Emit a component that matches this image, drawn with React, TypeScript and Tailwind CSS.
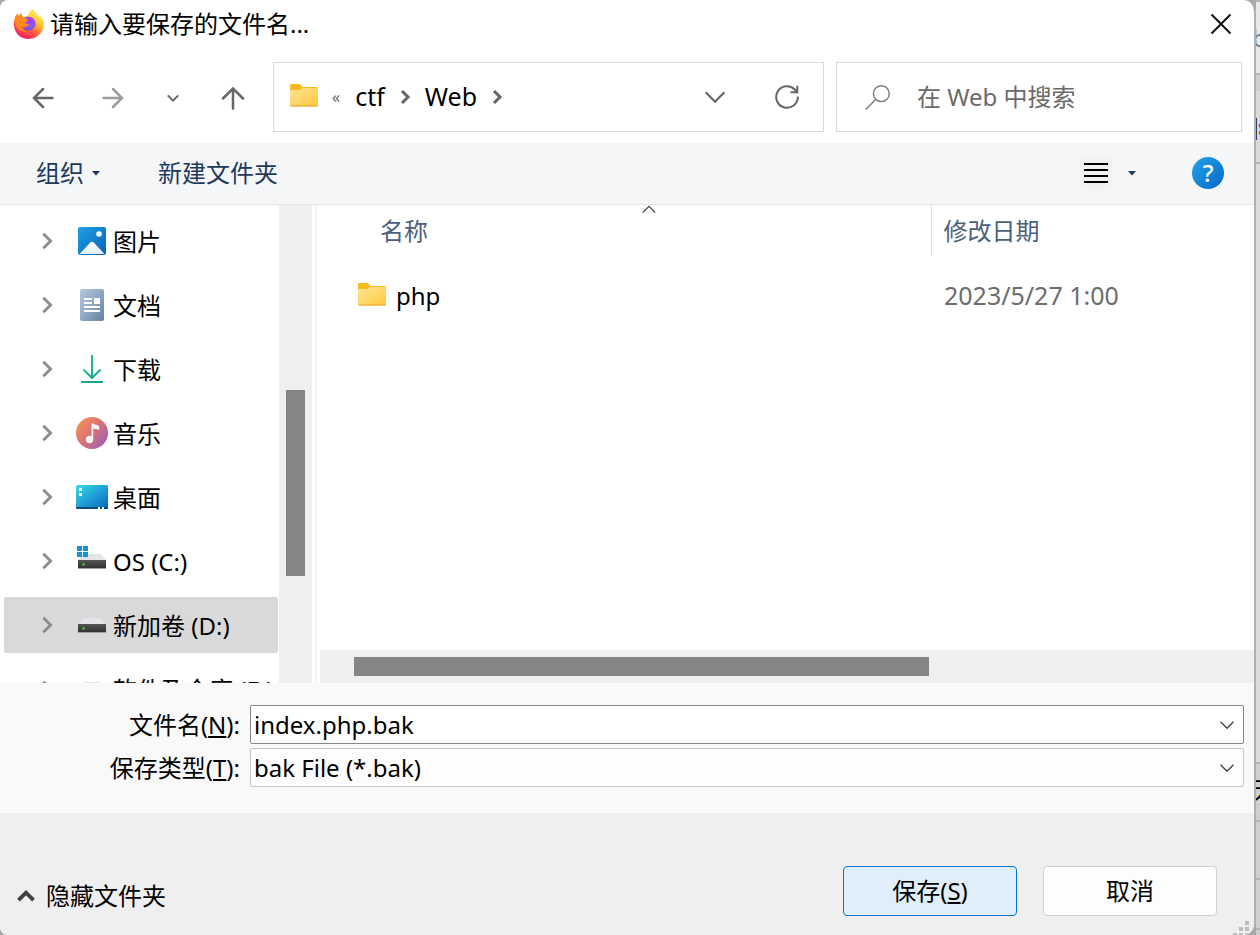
import type { ReactNode } from 'react';

function FirefoxIcon() {
  return (
    <svg viewBox="0 0 32 32" className="size-8 shrink-0" aria-hidden="true">
      <defs>
        <linearGradient id="fx-body" x1="0.85" y1="0.1" x2="0.2" y2="0.95">
          <stop offset="0" stopColor="#fff44f" />
          <stop offset="0.3" stopColor="#ffc02e" />
          <stop offset="0.55" stopColor="#ff7139" />
          <stop offset="0.8" stopColor="#ff3750" />
          <stop offset="1" stopColor="#f5156c" />
        </linearGradient>
        <linearGradient id="fx-flame" x1="0.7" y1="0" x2="0.4" y2="1">
          <stop offset="0" stopColor="#fff36e" />
          <stop offset="0.45" stopColor="#ffd23a" />
          <stop offset="1" stopColor="#ff8a16" stopOpacity="0" />
        </linearGradient>
        <radialGradient id="fx-globe" cx="0.6" cy="0.3" r="0.75">
          <stop offset="0" stopColor="#b833e1" />
          <stop offset="0.5" stopColor="#9059ff" />
          <stop offset="1" stopColor="#5b4fd8" />
        </radialGradient>
      </defs>
      <path
        d="M29.6 11.2c-.7-1.7-2.2-3.400-3.300-4 .9 1.700 1.300 3.400 1.500 4.600C26 7.400 22.900 5.600 20.400 1.700c-.2-.3-.3-.5-.4-.8-2.900 1.700-4.600 4.800-5 7.200-1.600.1-3 .6-4.300 1.400C8.700 8.400 8.200 7 8.700 5.300 7 6.100 5.900 7.400 5.100 8.500c-.5-.8-.5-2.200-.4-3C3 6.800 2.100 9.100 1.700 11 1.100 12.900 1 15 1 16.700 1 24.700 7.600 31 15.600 31c7.600 0 14-5.700 15.200-13.100.4-2.300 0-4.600-1.200-6.700z"
        fill="url(#fx-body)"
      />
      <circle cx="15.700" cy="15.700" r="6.900" fill="url(#fx-globe)" />
      <path
        d="M20 .9c-2.900 1.700-4.600 4.800-5 7.200 4 .1 7.900 2.800 8.200 7.500.2 4-2.400 7-5.800 7.800 5.500.8 10-3.200 10.400-8.500.2-5.600-5-8.600-7.400-13.200z"
        fill="url(#fx-flame)"
      />
      <path
        d="M4.700 5.500C3 6.800 2.100 9.100 1.700 11l-.4 3c1.900 7.500 7.400 10.900 13.800 9.900-3.100-.3-5.700-2.200-6.400-5.100 1.400.9 3.300.8 4.900-.2.600-.4 1.300-.6 1.900-.9.400-.3.600-.8.300-1.200-.6-.8-2.100-.6-3.400-1.100-.3-.8.200-1.400 2.800-2.800.3-1.200-1.900-1.300-2.600-1.800-.4-.4-.5-.9-1.900-1.300C8.700 8.400 8.200 7 8.700 5.300 7 6.100 5.900 7.400 5.100 8.500c-.5-.8-.5-2.200-.4-3z"
        fill="#ff8a1e"
      />
      <path d="M1.300 14c1.900 7.500 7.400 10.900 13.800 9.900 4 .3 7-.9 9-3.400-1.500 6-10 8.500-16 5.500-4-2-6.600-7-6.800-12z" fill="#ff4a4a" opacity="0.55" />
    </svg>
  );
}

function FolderIcon() {
  return (
    <svg viewBox="0 0 28 27" className="h-[27px] w-7 shrink-0" aria-hidden="true">
      <defs>
        <linearGradient id="folder" x1="0" y1="0" x2="1" y2="1">
          <stop offset="0" stopColor="#ffe596" />
          <stop offset="1" stopColor="#ffc83d" />
        </linearGradient>
      </defs>
      <path d="M0 1.500Q0 0 1.500 0H9q1 0 1.800 1L12.500 3H26.500Q28 3 28 4.500V12H0z" fill="#f9b91a" />
      <path d="M0 6H9q1.200 0 2-.8L12.300 4H27q1 0 1 1V21.500Q28 22.500 27 22.500H1Q0 22.500 0 21.500z" fill="url(#folder)" />
      <path d="M.5 22H27.500" stroke="#e6a82b" strokeWidth="1" />
    </svg>
  );
}

function PicturesIcon() {
  return (
    <svg viewBox="0 0 32 32" className="size-8" aria-hidden="true">
      <defs>
        <linearGradient id="pic" x1="0" y1="0" x2="1" y2="1">
          <stop offset="0" stopColor="#1f9fe8" />
          <stop offset="1" stopColor="#0861b8" />
        </linearGradient>
        <linearGradient id="hill" x1="0" y1="0" x2="0" y2="1">
          <stop offset="0" stopColor="#ffffff" />
          <stop offset="1" stopColor="#dfeefb" />
        </linearGradient>
      </defs>
      <rect x="2" y="2" width="28" height="28" rx="2" fill="url(#pic)" />
      <path d="M3.500 29L14.300 17.600q1.700-1.700 3.400 0L28.500 29z" fill="url(#hill)" />
      <circle cx="23" cy="9" r="2.800" fill="#f4faff" />
    </svg>
  );
}

function DocumentsIcon() {
  return (
    <svg viewBox="0 0 32 32" className="size-8" aria-hidden="true">
      <defs>
        <linearGradient id="doc" x1="0" y1="0" x2="1" y2="1">
          <stop offset="0" stopColor="#b5c6db" />
          <stop offset="0.5" stopColor="#8fa8c4" />
          <stop offset="1" stopColor="#657f9d" />
        </linearGradient>
      </defs>
      <rect x="4" y="0" width="24" height="32" rx="2" fill="url(#doc)" />
      <path d="M8 9h8v2H8zM8 13h8v2H8zM18 9h6v6h-6zM8 17h16v2H8zM8 21h16v2H8z" fill="#ffffff" />
    </svg>
  );
}

function DownloadsIcon() {
  return (
    <svg viewBox="0 0 32 32" className="size-8" fill="none" aria-hidden="true">
      <defs>
        <linearGradient id="down" gradientUnits="userSpaceOnUse" x1="6" y1="2" x2="26" y2="28">
          <stop offset="0" stopColor="#35c48c" />
          <stop offset="1" stopColor="#12a09a" />
        </linearGradient>
      </defs>
      <path d="M16 2v23M7.500 16.500L16 25l8.500-8.500M5 29h22" stroke="url(#down)" strokeWidth="2" />
    </svg>
  );
}

function MusicIcon() {
  return (
    <svg viewBox="0 0 32 32" className="size-8" aria-hidden="true">
      <defs>
        <linearGradient id="music" x1="0.1" y1="0.2" x2="0.9" y2="0.9">
          <stop offset="0" stopColor="#f38b58" />
          <stop offset="0.5" stopColor="#d6707c" />
          <stop offset="1" stopColor="#9c5fb5" />
        </linearGradient>
      </defs>
      <circle cx="16" cy="16" r="16" fill="url(#music)" />
      <circle cx="13.500" cy="22.500" r="3.700" fill="#f7f3f3" />
      <path d="M15.500 6.500h1.800q1 1.400 3.500 1.600 2.400.2 2.400 2.200V13q-2-.9-3.800-1-1.200 0-2.200-.6V22.500h-1.700z" fill="#f7f3f3" />
    </svg>
  );
}

function DesktopIcon() {
  return (
    <svg viewBox="0 0 32 32" className="size-8" aria-hidden="true">
      <defs>
        <linearGradient id="desk" x1="0" y1="0" x2="1" y2="1">
          <stop offset="0" stopColor="#36dbe4" />
          <stop offset="0.5" stopColor="#1f9fd6" />
          <stop offset="1" stopColor="#0a62b8" />
        </linearGradient>
      </defs>
      <rect x="0" y="4" width="32" height="24" rx="1.500" fill="url(#desk)" />
      <path d="M0 26h32v.5q0 1.500-1.500 1.500h-29Q0 28 0 26.500z" fill="#0b4a78" />
      <path d="M3 7h3v3H3zM3 12h3v3H3zM22 26h2v2h-2zM26 26h2v2h-2z" fill="#e9fbff" />
    </svg>
  );
}

function DriveIcon({ system = false }: { system?: boolean }) {
  return (
    <svg viewBox="0 0 32 32" className="size-8" aria-hidden="true">
      <defs>
        <linearGradient id="drive" x1="0" y1="0" x2="0" y2="1">
          <stop offset="0" stopColor="#555555" />
          <stop offset="1" stopColor="#303030" />
        </linearGradient>
      </defs>
      <path d="M7.500 9h17L30 15H2z" fill="#e3e4e8" />
      <path d="M2 15h28v8.500H2z" fill="url(#drive)" />
      <path d="M2 23h28v1H2z" fill="#a0a0a0" />
      <circle cx="7.500" cy="19.500" r="1.300" fill="#35d43a" />
      {system && <path d="M1 1h5v5H1zM7 1h5v5H7zM1 7h5v5H1zM7 7h5v5H7z" fill="#1590dc" />}
    </svg>
  );
}

function Chevron({ className, d, width }: { className: string; d: string; width: number }) {
  return (
    <svg viewBox="0 0 24 24" className={className} fill="none" stroke="currentColor" strokeWidth={width} aria-hidden="true">
      <path d={d} />
    </svg>
  );
}

const RIGHT = 'M8 4l8 8-8 8';
const DOWN = 'M5 8.500l7 7 7-7';

const places: { name: string; icon: ReactNode; selected?: boolean }[] = [
  { name: '图片', icon: <PicturesIcon /> },
  { name: '文档', icon: <DocumentsIcon /> },
  { name: '下载', icon: <DownloadsIcon /> },
  { name: '音乐', icon: <MusicIcon /> },
  { name: '桌面', icon: <DesktopIcon /> },
  { name: 'OS (C:)', icon: <DriveIcon system /> },
  { name: '新加卷 (D:)', icon: <DriveIcon />, selected: true },
  { name: '软件及仓库 (E:)', icon: <DriveIcon /> },
];

function TitleBar() {
  return (
    <header className="flex h-12 shrink-0 items-center justify-between pr-[22px] pb-px pl-[13px]">
      <h1 className="flex items-center gap-[5px]">
        <FirefoxIcon />
        请输入要保存的文件名...
      </h1>
      <button type="button" aria-label="关闭" className="text-[#111111]">
        <svg viewBox="0 0 22 22" className="size-[22px]" fill="none" stroke="currentColor" strokeWidth="2" aria-hidden="true">
          <path d="M1.500 1.500l19 19M20.500 1.500l-19 19" />
        </svg>
      </button>
    </header>
  );
}

function NavBar() {
  return (
    <nav className="flex shrink-0 items-center pt-[14px] pr-3 pb-[11px]">
      <div className="flex w-[273px] shrink-0 items-center pt-px pl-8">
        <button type="button" aria-label="后退" className="mr-[46px] text-[#666666]">
          <svg viewBox="0 0 24 24" className="size-6" fill="none" stroke="currentColor" strokeWidth="2.500" strokeLinecap="round" aria-hidden="true">
            <path d="M20.500 12H2.500M11 3l-9 9 9 9" />
          </svg>
        </button>
        <button type="button" aria-label="前进" className="mr-[38px] text-[#9c9c9c]">
          <svg viewBox="0 0 24 24" className="size-6" fill="none" stroke="currentColor" strokeWidth="2.500" strokeLinecap="round" aria-hidden="true">
            <path d="M1.500 12H19.500M11 3l9 9-9 9" />
          </svg>
        </button>
        <button type="button" aria-label="最近浏览的位置" className="mr-[39px] text-[#666666]">
          <Chevron className="size-[18px]" d={DOWN} width={2.600} />
        </button>
        <button type="button" aria-label="上移" className="text-[#666666]">
          <svg viewBox="0 0 24 24" className="size-6" fill="none" stroke="currentColor" strokeWidth="2.500" strokeLinecap="round" aria-hidden="true">
            <path d="M12 22.500V3M2 12.500L12 2.500l10 10" />
          </svg>
        </button>
      </div>
      <div className="flex h-[70px] flex-1 items-center border border-[#d9d9d9] pl-4">
        <FolderIcon />
        <span className="mr-[15px] ml-[14px] text-base text-[#666666]">«</span>
        <a href="#ctf" className="text-[25px]">ctf</a>
        <Chevron className="mx-[11px] size-[18px] text-[#666666]" d={RIGHT} width={4} />
        <a href="#web" className="text-[25px]">Web</a>
        <Chevron className="ml-[11px] size-[18px] text-[#666666]" d={RIGHT} width={4} />
        <button type="button" aria-label="以前的位置" className="mr-[46px] ml-auto text-[#666666]">
          <Chevron className="size-7" d="M4 8l8 8 8-8" width={1.900} />
        </button>
        <button type="button" aria-label="刷新" className="mr-6 text-[#666666]">
          <svg viewBox="0 0 24 24" className="size-6" fill="none" stroke="currentColor" strokeWidth="2" aria-hidden="true">
            <path d="M22.800 11.500A10.800 10.800 0 1 1 19.800 4.500L22 7M22.300.8V7.300H15.500" />
          </svg>
        </button>
      </div>
      <label className="ml-3 flex h-[70px] w-[406px] items-center gap-[27px] border border-[#d9d9d9] pl-7">
        <svg viewBox="0 0 25 25" className="size-[25px] shrink-0 text-[#777777]" fill="none" stroke="currentColor" strokeWidth="1.400" aria-hidden="true">
          <circle cx="16.300" cy="8.700" r="7.900" />
          <path d="M10.600 14.400L.6 24.400" />
        </svg>
        <input type="search" aria-label="搜索" placeholder="在 Web 中搜索" className="min-w-0 flex-1 outline-none placeholder:text-[#6a6a6a] placeholder:opacity-100" />
      </label>
    </nav>
  );
}

function Triangle() {
  return (
    <svg viewBox="0 0 8 5" className="h-[5px] w-2" aria-hidden="true">
      <path d="M0 0h8L4 4.500z" fill="currentColor" />
    </svg>
  );
}

function Toolbar() {
  return (
    <div className="flex h-[62px] shrink-0 items-center border-b border-[#e5e7ea] bg-[#f4f6f8] pr-[30px] pb-px pl-9 text-[#1e395b]">
      <button type="button" className="mr-[58px] flex items-center gap-2">
        组织
        <Triangle />
      </button>
      <button type="button">新建文件夹</button>
      <button type="button" aria-label="更改视图" className="mr-4 ml-auto rounded bg-[#f0f1f2] p-1 text-black">
        <svg viewBox="0 0 24 24" className="size-6" aria-hidden="true">
          <path d="M0 2h24v2H0zM0 8h24v2H0zM0 14h24v2H0zM0 20h24v2H0z" fill="currentColor" />
        </svg>
      </button>
      <button type="button" aria-label="更多选项" className="mr-14">
        <Triangle />
      </button>
      <button type="button" aria-label="帮助" className="flex size-8 items-center justify-center rounded-full bg-linear-to-br from-[#25a3ea] to-[#0568c8] font-medium text-white">
        ?
      </button>
    </div>
  );
}

function PlacesTree() {
  return (
    <aside className="flex w-[312px] shrink-0 overflow-hidden">
      <ul className="flex min-w-0 flex-1 flex-col gap-2 pt-2 pr-px pl-1">
        {places.map((place) => (
          <li key={place.name} className="shrink-0">
            <button
              type="button"
              className={
                place.selected
                  ? 'flex h-14 w-full items-center rounded-xs bg-[#d9d9d9] pl-8 whitespace-nowrap'
                  : 'flex h-14 w-full items-center rounded-xs pl-8 whitespace-nowrap'
              }
            >
              <Chevron className="mr-[18px] size-[22px] text-[#8a8a8a]" d={RIGHT} width={3} />
              <span className="mr-[5px] shrink-0">{place.icon}</span>
              <span className="pt-px">{place.name}</span>
            </button>
          </li>
        ))}
      </ul>
      <div className="flex w-[33px] shrink-0 flex-col items-center bg-[#efefef] pt-[185px]">
        <div className="h-[186px] w-[19px] bg-[#858585]" />
      </div>
    </aside>
  );
}

function FileList() {
  return (
    <section className="ml-[3px] flex min-w-0 flex-1 flex-col border-l-2 border-[#f2f2f2]">
      <table className="w-full table-fixed text-left">
        <thead>
          <tr className="h-[51px] text-[#4c607a]">
            <th scope="col" className="relative w-[614px] pt-px pl-[63px] font-normal">
              名称
              <span className="absolute inset-x-0 top-0 flex justify-center pl-[50px] text-[#444444]">
                <svg viewBox="0 0 14 9" className="h-[9px] w-[14px]" fill="none" stroke="currentColor" strokeWidth="1.200" aria-hidden="true">
                  <path d="M.8 7.500L7 1.300l6.200 6.200" />
                </svg>
              </span>
            </th>
            <th scope="col" className="border-l border-[#e0e0e0] pt-px pl-3 font-normal">修改日期</th>
          </tr>
        </thead>
        <tbody>
          <tr className="h-20">
            <td className="pl-[41px]">
              <span className="flex items-center gap-[10px]">
                <FolderIcon />
                php
              </span>
            </td>
            <td className="pl-[13px] text-[25px] text-[#6d6d6d]">2023/5/27 1:00</td>
          </tr>
        </tbody>
      </table>
      <div className="mt-auto ml-[3px] flex h-[33px] items-center bg-[#efefef] pl-[34px]">
        <div className="h-[19px] w-[575px] bg-[#858585]" />
      </div>
    </section>
  );
}

function FileFields() {
  return (
    <div className="grid shrink-0 grid-cols-[240px_1fr] gap-x-[10px] gap-y-1 bg-[#f9f9f9] pt-[22px] pr-[10px] pb-[26px]">
      <label htmlFor="file-name" className="flex items-center justify-end">
        <span>
          文件名(<u className="underline-offset-2">N</u>):
        </span>
      </label>
      <div className="flex h-[39px] items-center rounded-xs border border-[#868686] bg-white pr-[5px]">
        <input id="file-name" defaultValue="index.php.bak" className="h-full min-w-0 flex-1 pb-px pl-[3px] outline-none" />
        <button type="button" aria-label="显示以前的文件名" className="text-[#444444]">
          <Chevron className="size-[22px]" d={DOWN} width={1.500} />
        </button>
      </div>
      <label htmlFor="file-type" className="flex items-center justify-end">
        <span>
          保存类型(<u className="underline-offset-2">T</u>):
        </span>
      </label>
      <div className="grid h-[39px] items-center rounded-xs border border-[#c6c6c6] bg-[#fdfdfd]">
        <select id="file-type" className="col-start-1 row-start-1 h-full w-full appearance-none pl-[3px] outline-none">
          <option>bak File (*.bak)</option>
        </select>
        <span className="pointer-events-none col-start-1 row-start-1 justify-self-end pr-[5px] text-[#444444]">
          <Chevron className="size-[22px]" d={DOWN} width={1.500} />
        </span>
      </div>
    </div>
  );
}

function Footer() {
  return (
    <footer className="relative flex h-[122px] shrink-0 items-end justify-between bg-[#efefef] pr-[37px] pb-[19px] pl-4">
      <button type="button" className="mb-1 flex items-center gap-[10px]">
        <Chevron className="size-5 text-[#404040]" d="M3 17l9-9 9 9" width={4.500} />
        隐藏文件夹
      </button>
      <div className="flex gap-[26px]">
        <button type="button" className="h-[50px] w-[174px] rounded border border-[#0078d4] bg-[#e0eef9]">
          保存(<u className="underline-offset-2">S</u>)
        </button>
        <button type="button" className="h-[50px] w-[174px] rounded border border-[#d0d0d0] bg-[#fdfdfd]">
          取消
        </button>
      </div>
      <svg viewBox="0 0 16 14" className="absolute right-[5px] bottom-0 h-[14px] w-4" aria-hidden="true">
        <path d="M12 0h4v4h-4zM6 6h4v4H6zM12 6h4v4h-4zM0 12h4v2H0zM6 12h4v2H6zM12 12h4v2h-4z" fill="#bcbcbc" />
      </svg>
    </footer>
  );
}

function PageBehind() {
  return (
    <div className="relative flex w-1 shrink-0 flex-col overflow-hidden bg-[#cfcfcf]" aria-hidden="true">
      <div className="h-[75px] border-t-2 border-b-2 border-[#b5b5b5] bg-[#e8e8e8]" />
      <div className="h-4 bg-[#cfcfcf]" />
      <div className="h-[73px] border-b-2 border-[#b5b5b5] bg-[#d9d9d9]" />
      <div className="flex-1 bg-[#dcdcdc]" />
      <div className="h-[173px] border-t-2 border-[#b5b5b5]">
        <div className="h-[58px] border-b-2 border-[#b5b5b5]" />
        <div className="h-[58px] border-b-2 border-[#b5b5b5]" />
        <div className="h-[50px] border-b-2 border-[#b5b5b5]" />
      </div>
      <span className="absolute top-[22px] -left-1 leading-8 text-[#777777]">b</span>
      <span className="absolute top-[110px] left-0.5 leading-8 font-bold text-[#3a2a10]">s</span>
      <span className="absolute top-[774px] -left-1 leading-8">无</span>
      <span className="absolute top-[118px] left-0 h-[22px] w-px bg-[#2c3e70]" />
    </div>
  );
}

export default function App() {
  return (
    <div className="flex h-screen min-h-[700px] overflow-hidden bg-[#a8a8a8] font-['Noto_Sans','Noto_Sans_CJK_SC',sans-serif] text-2xl text-black">
      <main className="flex min-w-0 flex-1 flex-col overflow-hidden rounded-l-lg rounded-r-xl border-r-2 border-[#b0b0b0] bg-white">
        <TitleBar />
        <NavBar />
        <Toolbar />
        <div className="flex min-h-0 flex-1 overflow-hidden">
          <PlacesTree />
          <FileList />
        </div>
        <FileFields />
        <Footer />
      </main>
      <PageBehind />
    </div>
  );
}
